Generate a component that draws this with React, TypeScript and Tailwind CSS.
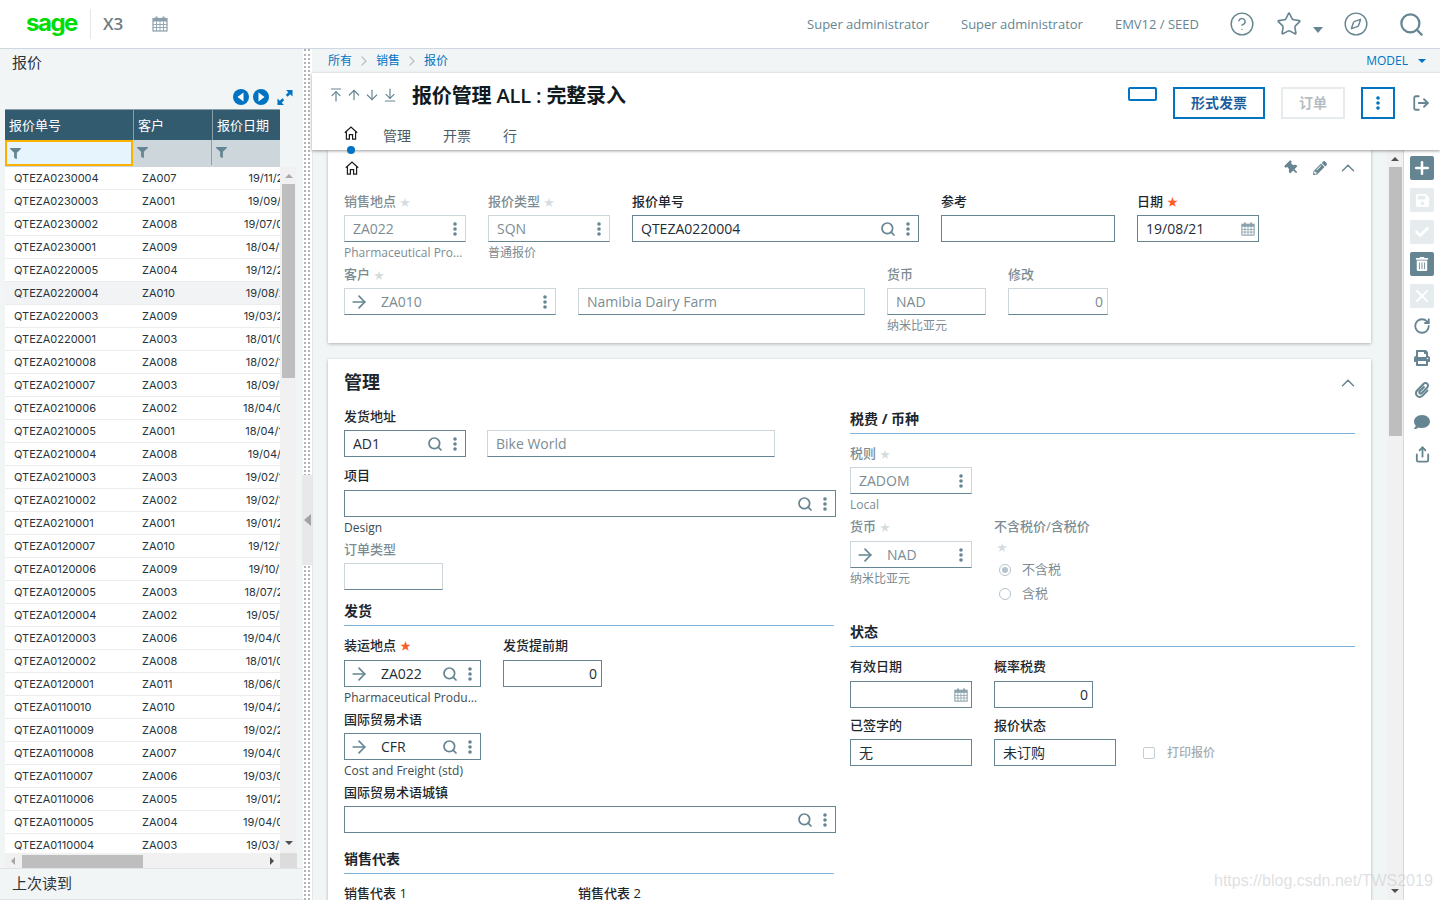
import type { ReactNode } from "react"
import {
  ArrowDown,
  ArrowDownToLine,
  ArrowRight,
  ArrowUp,
  ArrowUpToLine,
  ChevronRight,
  ChevronUp,
  CircleHelp,
  Compass,
  LogOut,
  Plus,
  RotateCw,
  Search,
  Share,
  Star,
  X,
} from "lucide-react"
import { FaCheck, FaComment, FaFilter, FaPaperclip, FaPencilAlt, FaPrint, FaSave, FaThumbtack, FaTrashAlt } from "react-icons/fa"

const rows = [
  ["QTEZA0230004", "ZA007", "19/11/25"],
  ["QTEZA0230003", "ZA001", "19/09/11"],
  ["QTEZA0230002", "ZA008", "19/07/03"],
  ["QTEZA0230001", "ZA009", "18/04/17"],
  ["QTEZA0220005", "ZA004", "19/12/26"],
  ["QTEZA0220004", "ZA010", "19/08/21"],
  ["QTEZA0220003", "ZA009", "19/03/25"],
  ["QTEZA0220001", "ZA003", "18/01/08"],
  ["QTEZA0210008", "ZA008", "18/02/16"],
  ["QTEZA0210007", "ZA003", "18/09/17"],
  ["QTEZA0210006", "ZA002", "18/04/05"],
  ["QTEZA0210005", "ZA001", "18/04/14"],
  ["QTEZA0210004", "ZA008", "19/04/11"],
  ["QTEZA0210003", "ZA003", "19/02/18"],
  ["QTEZA0210002", "ZA002", "19/02/15"],
  ["QTEZA0210001", "ZA001", "19/01/25"],
  ["QTEZA0120007", "ZA010", "19/12/16"],
  ["QTEZA0120006", "ZA009", "19/10/17"],
  ["QTEZA0120005", "ZA003", "18/07/25"],
  ["QTEZA0120004", "ZA002", "19/05/17"],
  ["QTEZA0120003", "ZA006", "19/04/05"],
  ["QTEZA0120002", "ZA008", "18/01/08"],
  ["QTEZA0120001", "ZA011", "18/06/05"],
  ["QTEZA0110010", "ZA010", "19/04/25"],
  ["QTEZA0110009", "ZA008", "19/02/25"],
  ["QTEZA0110008", "ZA007", "19/04/08"],
  ["QTEZA0110007", "ZA006", "19/03/05"],
  ["QTEZA0110006", "ZA005", "19/01/25"],
  ["QTEZA0110005", "ZA004", "19/04/09"],
  ["QTEZA0110004", "ZA003", "19/03/17"],
]

function Dots() {
  return (
    <svg width="4" height="14" viewBox="0 0 4 14" className="shrink-0 fill-[#668592]">
      <circle cx="2" cy="2" r="1.8" />
      <circle cx="2" cy="7" r="1.8" />
      <circle cx="2" cy="12" r="1.8" />
    </svg>
  )
}

function CalendarIcon({ className, size = 16 }: { className?: string; size?: number }) {
  return (
    <svg width={size} height={size} viewBox="0 0 16 16" className={className}>
      <rect x="1" y="2.5" width="14" height="12.5" fill="none" stroke="#8aa0ab" strokeWidth="1.2" />
      <rect x="1" y="2.5" width="14" height="3" fill="#8aa0ab" />
      <rect x="3.5" y="0.5" width="2" height="3.5" fill="#8aa0ab" />
      <rect x="10.5" y="0.5" width="2" height="3.5" fill="#8aa0ab" />
      <path d="M1 8.5H15M1 11.5H15M4.5 5.5V15M8 5.5V15M11.5 5.5V15" stroke="#8aa0ab" strokeWidth="0.9" />
    </svg>
  )
}

function HomeIcon() {
  return (
    <svg width="14" height="14" viewBox="0 0 14 14" fill="none" stroke="#1c1c1c" strokeWidth="1.2">
      <path d="M0.8 6.8L7 1L13.2 6.8" />
      <path d="M2.4 5.6V13.2H5.4V8.6H8.6V13.2H11.6V5.6" />
    </svg>
  )
}

type InputProps = {
  w: string
  value?: string
  disabled?: boolean
  arrow?: boolean
  search?: boolean
  more?: boolean
  calendar?: boolean
  right?: boolean
}

function Input({ w, value, disabled, arrow, search, more, calendar, right }: InputProps) {
  return (
    <div
      className={`${w} h-[27px] flex items-center border shrink-0 ${
        disabled ? "border-[#ccd6db] border-b-[#668592] text-[#7d8c93]" : "border-[#668592] text-[#1f2d36]"
      } bg-white pl-[8px] ${right ? "pr-[4px]" : "pr-[8px]"} text-[14px]`}
    >
      {arrow && <ArrowRight size={20} strokeWidth={2} className="text-[#668592] -ml-[4px] mr-[10px] shrink-0" />}
      <span className={`flex-1 truncate ${right ? "text-right" : ""} ${arrow ? "pl-[2px]" : ""}`}>{value}</span>
      {search && <Search size={16} strokeWidth={2.6} className="text-[#668592] mr-[10px] shrink-0" />}
      {more && <Dots />}
      {calendar && <CalendarIcon size={14} className="-mr-[5px]" />}
    </div>
  )
}

function Label({ text, star, gray, className }: { text: string; star?: "req" | "opt"; gray?: boolean; className?: string }) {
  return (
    <div className={`h-[20px] leading-[18px] text-[13px] font-medium whitespace-nowrap ${gray ? "text-[#7d8c93]" : "text-[#1c262c]"} ${className ?? ""}`}>
      {text}
      {star === "req" && <span className="ml-[4px] text-[#ff5a1f] text-[11px]">★</span>}
      {star === "opt" && <span className="ml-[4px] text-[#d5dcdf] text-[10px]">★</span>}
    </div>
  )
}

function Sub({ text, gray }: { text: string; gray?: boolean }) {
  return <div className={`h-[21px] leading-[21px] text-[12px] truncate ${gray ? "text-[#7d8c93]" : "text-[#3b4a52]"}`}>{text}</div>
}

function Heading({ text, className }: { text: string; className?: string }) {
  return (
    <div className={`h-[25px] leading-[20px] text-[14px] font-bold text-[#1c262c] border-b border-[#7fb4dc] ${className ?? ""}`}>
      {text}
    </div>
  )
}

function ToolButton({ on, children }: { on?: boolean; children: ReactNode }) {
  return (
    <div className={`w-[24px] h-[24px] mb-[8px] rounded-[2px] flex items-center justify-center text-white ${on ? "bg-[#668592]" : "bg-[#e6ebed]"}`}>
      {children}
    </div>
  )
}

function ToolIcon({ children }: { children: ReactNode }) {
  return <div className="w-[24px] h-[24px] mb-[8px] flex items-center justify-center text-[#668592]">{children}</div>
}

function LeftPanel() {
  return (
    <div className="w-[303px] shrink-0 bg-[#f2f5f6] flex flex-col relative">
      <div className="h-[26px] pl-[12px] leading-[26px] text-[15px] text-[#2b343a]">报价</div>
      <div className="h-[18px] mt-[13px] flex items-center justify-end pr-[10px]">
        <svg width="16" height="16" viewBox="0 0 16 16" className="mr-[4px]">
          <circle cx="8" cy="8" r="8" fill="#0073c2" />
          <path d="M10.5 3.5V12.5L4.5 8Z" fill="white" />
        </svg>
        <svg width="16" height="16" viewBox="0 0 16 16" className="mr-[8px]">
          <circle cx="8" cy="8" r="8" fill="#0073c2" />
          <path d="M5.5 3.5V12.5L11.5 8Z" fill="white" />
        </svg>
        <svg width="16" height="15" viewBox="0 0 16 15" fill="#0073c2">
          <path d="M9 0H15.5V6.5L13.2 4.2L10.6 6.8L8.8 5L11.3 2.3Z" />
          <path d="M7 15H0.5V8.5L2.8 10.8L5.4 8.2L7.2 10L4.7 12.7Z" />
        </svg>
      </div>
      <div className="ml-[5px] mt-[3px] flex-1 flex flex-col min-h-0">
        <div className="w-[275px] h-[31px] border-t border-[#8b9fa8] bg-[#335b70] flex text-white text-[13px] leading-[30px] shrink-0">
          <div className="w-[129px] pl-[4px] border-r border-[#8b9fa8]">报价单号</div>
          <div className="w-[79px] pl-[4px] border-r border-[#8b9fa8]">客户</div>
          <div className="flex-1 pl-[4px]">报价日期</div>
        </div>
        <div className="w-[275px] h-[27px] bg-[#ccd6db] flex shrink-0">
          <div className="w-[128px] h-[26px] border-2 border-[#fcb000] bg-[#e6f4fd] flex items-center pl-[3px]">
            <FaFilter size={11} className="text-[#668592]" />
          </div>
          <div className="w-[79px] h-[25px] border-r border-[#8b9fa8] flex items-center pl-[4px]">
            <FaFilter size={11} className="text-[#668592]" />
          </div>
          <div className="flex-1 flex items-center pl-[4px] h-[25px]">
            <FaFilter size={11} className="text-[#668592]" />
          </div>
        </div>
        <div className="h-[686px] flex shrink-0 overflow-hidden">
          <div className="w-[275px] shrink-0">
            {rows.map((r) => (
              <div
                key={r[0]}
                className={`h-[23px] leading-[23px] border-b border-[#ececec] flex text-[11px] text-[#27343b] font-['Inter','Liberation_Sans',sans-serif] ${
                  r[0] === "QTEZA0220004" ? "bg-[#f2f3f5]" : "bg-white"
                }`}
              >
                <div className="w-[129px] pl-[9px]">{r[0]}</div>
                <div className="w-[79px] pl-[8px]">{r[1]}</div>
                <div className="w-[67px] overflow-hidden">
                  <div className="w-[77px] text-right whitespace-nowrap">{r[2]}</div>
                </div>
              </div>
            ))}
          </div>
          <div className="w-[16px] bg-[#f1f1f1] relative">
            <div className="absolute left-[2px] top-[17px] w-[13px] h-[194px] bg-[#bebebe]" />
            <div className="absolute left-[5px] top-[7px] w-0 h-0 border-x-[4px] border-x-transparent border-b-[4px] border-b-[#a8a8a8]" />
            <div className="absolute left-[5px] top-[674px] w-0 h-0 border-x-[4px] border-x-transparent border-t-[4px] border-t-[#505050]" />
          </div>
        </div>
        <div className="h-[15px] flex shrink-0">
          <div className="w-[275px] bg-[#f1f1f1] relative">
            <div className="absolute left-[17px] top-[2px] w-[121px] h-[13px] bg-[#bebebe]" />
            <div className="absolute left-[6px] top-[4px] w-0 h-0 border-y-[4px] border-y-transparent border-r-[4px] border-r-[#a8a8a8]" />
            <div className="absolute left-[265px] top-[4px] w-0 h-0 border-y-[4px] border-y-transparent border-l-[4px] border-l-[#505050]" />
          </div>
          <div className="w-[17px] bg-[#dcdcdc]" />
        </div>
      </div>
      <div className="h-[32px] border-t border-b border-[#dfe3e5] pl-[12px] leading-[28px] text-[15px] text-[#2b343a] shrink-0">上次读到</div>
    </div>
  )
}

function TitleBar() {
  return (
    <div className="h-[77px] bg-white relative z-10 shadow-[0_1px_3px_rgba(0,0,0,0.4)] shrink-0">
      <div className="pt-[14px] pl-[16px] pr-[10px] flex items-start">
        <div className="flex text-[#668592] w-[84px] gap-[2px]">
          <ArrowUpToLine size={16} strokeWidth={1.8} />
          <ArrowUp size={16} strokeWidth={1.8} />
          <ArrowDown size={16} strokeWidth={1.8} />
          <ArrowDownToLine size={16} strokeWidth={1.8} />
        </div>
        <div className="-mt-[5px] text-[20px] leading-[28px] font-semibold tracking-[-0.15px] text-[#111a1f]">报价管理 ALL : 完整录入</div>
        <div className="ml-auto flex items-start gap-[16px]">
          <div className="w-[29px] h-[14px] border-2 border-[#0073c2] rounded-[2px]" />
          <div className="w-[92px] h-[32px] border-2 border-[#0073c2] flex items-center justify-center pb-[2px] text-[14px] font-bold text-[#1d5f9e]">形式发票</div>
          <div className="w-[64px] h-[32px] border-2 border-[#e6ebed] flex items-center justify-center pb-[2px] text-[14px] font-bold text-[#b5bdc2]">订单</div>
          <div className="w-[34px] h-[32px] border-2 border-[#0073c2] flex items-center justify-center">
            <svg width="4" height="14" viewBox="0 0 4 14" className="fill-[#0073c2]">
              <circle cx="2" cy="2" r="1.8" />
              <circle cx="2" cy="7" r="1.8" />
              <circle cx="2" cy="12" r="1.8" />
            </svg>
          </div>
          <div className="h-[32px] flex items-center ml-[1px]">
            <LogOut size={18} strokeWidth={2.4} className="text-[#668592]" />
          </div>
        </div>
      </div>
      <div className="absolute left-[32px] top-[50px] flex items-center h-[20px] text-[14px] text-[#4c5b63]">
        <HomeIcon />
        <span className="ml-[25px] mt-[5px]">管理</span>
        <span className="ml-[32px] mt-[5px]">开票</span>
        <span className="ml-[32px] mt-[5px]">行</span>
      </div>
      <div className="absolute left-[35px] top-[73px] w-[8px] h-[8px] rounded-full bg-[#0073c2]" />
    </div>
  )
}

function TopCard() {
  return (
    <div className="h-[193px] bg-white shadow-[0_1px_3px_rgba(0,0,0,0.28)] px-[16px] shrink-0 mb-[16px]">
      <div className="h-[42px] flex items-center">
        <div className="mt-[-6px] ml-[1px]">
          <HomeIcon />
        </div>
        <div className="ml-auto mt-[-6px] -mr-[4px] flex items-center text-[#668592]">
          <FaThumbtack size={14} className="-rotate-45" />
          <FaPencilAlt size={14} className="ml-[14px]" />
          <ChevronUp size={22} strokeWidth={1.6} className="ml-[10px]" />
        </div>
      </div>
      <div className="flex gap-[22px]">
        <div className="w-[122px]">
          <Label text="销售地点" star="opt" gray className="mb-[3px]" />
          <Input w="w-[122px]" value="ZA022" disabled more />
          <Sub text="Pharmaceutical Products" gray />
        </div>
        <div className="w-[122px]">
          <Label text="报价类型" star="opt" gray className="mb-[3px]" />
          <Input w="w-[122px]" value="SQN" disabled more />
          <Sub text="普通报价" gray />
        </div>
        <div className="w-[287px]">
          <Label text="报价单号" className="mb-[3px]" />
          <Input w="w-[287px]" value="QTEZA0220004" search more />
        </div>
        <div className="w-[174px]">
          <Label text="参考" className="mb-[3px]" />
          <Input w="w-[174px]" />
        </div>
        <div className="w-[122px]">
          <Label text="日期" star="req" className="mb-[3px]" />
          <Input w="w-[122px]" value="19/08/21" calendar />
        </div>
      </div>
      <div className="flex gap-[22px] mt-[2px]">
        <div className="w-[212px]">
          <Label text="客户" star="opt" gray className="mb-[3px]" />
          <Input w="w-[212px]" value="ZA010" disabled arrow more />
        </div>
        <div className="w-[287px] pt-[23px]">
          <Input w="w-[287px]" value="Namibia Dairy Farm" disabled />
        </div>
        <div className="w-[99px]">
          <Label text="货币" gray className="mb-[3px]" />
          <Input w="w-[99px]" value="NAD" disabled />
          <Sub text="纳米比亚元" gray />
        </div>
        <div className="w-[100px]">
          <Label text="修改" gray className="mb-[3px]" />
          <Input w="w-[100px]" value="0" disabled right />
        </div>
      </div>
    </div>
  )
}

function LeftColumn() {
  return (
    <div className="w-[492px] shrink-0">
      <Label text="发货地址" className="mb-[3px]" />
      <div className="flex gap-[21px]">
        <Input w="w-[122px]" value="AD1" search more />
        <Input w="w-[288px]" value="Bike World" disabled />
      </div>
      <Label text="项目" className="mt-[9px] mb-[4px]" />
      <Input w="w-[492px]" search more />
      <Sub text="Design" />
      <Label text="订单类型" gray className="mt-[2px] mb-[3px]" />
      <Input w="w-[99px]" disabled />
      <Heading text="发货" className="mt-[11px] w-[490px]" />
      <div className="flex gap-[22px] mt-[10px]">
        <div className="w-[137px]">
          <Label text="装运地点" star="req" className="mb-[4px]" />
          <Input w="w-[137px]" value="ZA022" arrow search more />
          <Sub text="Pharmaceutical Products" />
        </div>
        <div className="w-[99px]">
          <Label text="发货提前期" className="mb-[4px]" />
          <Input w="w-[99px]" value="0" right />
        </div>
      </div>
      <Label text="国际贸易术语" className="mt-[2px] mb-[3px]" />
      <Input w="w-[137px]" value="CFR" arrow search more />
      <Sub text="Cost and Freight (std)" />
      <Label text="国际贸易术语城镇" className="mt-[2px] mb-[3px]" />
      <Input w="w-[492px]" search more />
      <Heading text="销售代表" className="mt-[16px] w-[490px]" />
      <div className="flex mt-[10px]">
        <Label text="销售代表 1" className="w-[234px]" />
        <Label text="销售代表 2" />
      </div>
    </div>
  )
}

function Radio({ on, text }: { on?: boolean; text: string }) {
  return (
    <div className="h-[24px] flex items-center text-[13px] text-[#7d8c93]">
      <span className="ml-[5px] w-[12px] h-[12px] rounded-full border border-[#b5c4cb] flex items-center justify-center">
        {on && <span className="w-[6px] h-[6px] rounded-full bg-[#b5c4cb]" />}
      </span>
      <span className="ml-[11px]">{text}</span>
    </div>
  )
}

function RightColumn() {
  return (
    <div className="w-[505px] shrink-0 pt-[2px]">
      <Heading text="税费 / 币种" />
      <Label text="税则" star="opt" gray className="mt-[10px] mb-[3px]" />
      <Input w="w-[122px]" value="ZADOM" disabled more />
      <Sub text="Local" gray />
      <div className="flex gap-[22px] mt-[2px]">
        <div className="w-[122px]">
          <Label text="货币" star="opt" gray className="mb-[4px]" />
          <Input w="w-[122px]" value="NAD" disabled arrow more />
          <Sub text="纳米比亚元" gray />
        </div>
        <div>
          <Label text="不含税价/含税价" gray />
          <div className="h-[21px] leading-[21px] text-[10px] text-[#d5dcdf] pl-[3px]">★</div>
          <Radio on text="不含税" />
          <Radio text="含税" />
        </div>
      </div>
      <Heading text="状态" className="mt-[16px]" />
      <div className="flex gap-[22px] mt-[10px]">
        <div className="w-[122px]">
          <Label text="有效日期" className="mb-[4px]" />
          <Input w="w-[122px]" calendar />
        </div>
        <div className="w-[99px]">
          <Label text="概率税费" className="mb-[4px]" />
          <Input w="w-[99px]" value="0" right />
        </div>
      </div>
      <div className="flex gap-[22px] mt-[8px]">
        <div className="w-[122px]">
          <Label text="已签字的" className="mb-[3px]" />
          <Input w="w-[122px]" value="无" />
        </div>
        <div className="w-[122px]">
          <Label text="报价状态" className="mb-[3px]" />
          <Input w="w-[122px]" value="未订购" />
        </div>
        <div className="pt-[24px] h-[50px] flex items-center ml-[5px]">
          <span className="w-[12px] h-[12px] rounded-[2px] border border-[#c3ced3]" />
          <span className="ml-[12px] text-[12px] font-medium text-[#a3adb2]">打印报价</span>
        </div>
      </div>
    </div>
  )
}

function Content() {
  return (
    <div className="flex-1 flex min-h-0 overflow-hidden">
      <div className="w-[1091px] flex bg-[#f2f5f6] shrink-0 border-l border-[#e3e7e9]">
        <div className="flex-1 pl-[15px] pr-[16px] flex flex-col">
          <TopCard />
          <div className="flex-1 bg-white shadow-[0_1px_3px_rgba(0,0,0,0.28)] px-[16px]">
            <div className="pt-[11px] h-[48px] flex items-start">
              <div className="text-[18px] leading-[24px] font-bold text-[#1c262c]">管理</div>
              <ChevronUp size={22} strokeWidth={1.6} className="ml-auto -mr-[4px] mt-[2px] text-[#668592]" />
            </div>
            <div className="flex gap-[14px]">
              <LeftColumn />
              <RightColumn />
            </div>
          </div>
        </div>
        <div className="w-[16px] bg-[#f1f1f1] relative shrink-0">
          <div className="absolute left-[2px] top-[17px] w-[13px] h-[269px] bg-[#bebebe]" />
          <div className="absolute left-[4px] top-[7px] w-0 h-0 border-x-[4px] border-x-transparent border-b-[4px] border-b-[#505050]" />
          <div className="absolute left-[4px] top-[739px] w-0 h-0 border-x-[4px] border-x-transparent border-t-[4px] border-t-[#505050]" />
        </div>
      </div>
      <div className="w-[37px] shrink-0 bg-white border-l border-[#d5d9db] pl-[6px] pt-[6px]">
        <ToolButton on>
          <Plus size={20} strokeWidth={3} />
        </ToolButton>
        <ToolButton>
          <FaSave size={15} />
        </ToolButton>
        <ToolButton>
          <FaCheck size={14} />
        </ToolButton>
        <ToolButton on>
          <FaTrashAlt size={14} />
        </ToolButton>
        <ToolButton>
          <X size={20} strokeWidth={2.4} />
        </ToolButton>
        <div className="-mt-[2px]">
          <ToolIcon>
            <RotateCw size={18} strokeWidth={2.4} />
          </ToolIcon>
          <ToolIcon>
            <FaPrint size={16} />
          </ToolIcon>
          <ToolIcon>
            <FaPaperclip size={16} />
          </ToolIcon>
          <ToolIcon>
            <FaComment size={16} />
          </ToolIcon>
          <ToolIcon>
            <Share size={17} strokeWidth={2.6} />
          </ToolIcon>
        </div>
      </div>
    </div>
  )
}

export default function App() {
  return (
    <div className="w-[1440px] h-[900px] overflow-hidden relative bg-white flex flex-col font-['Open_Sans','Noto_Sans_CJK_SC',sans-serif]">
      <header className="h-[49px] shrink-0 flex items-center bg-white border-b border-[#cfd8e0]">
        <div className="w-[64px] ml-[26px] text-[24px] font-bold leading-none tracking-[-1.5px] text-[#00dc06] -mt-[2px] font-['Inter',sans-serif]">sage</div>
        <div className="w-px h-[30px] bg-[#e6e6e6]" />
        <div className="ml-[12px] text-[17px] font-semibold text-[#6f7c84]">X3</div>
        <CalendarIcon className="ml-[29px]" />
        <div className="ml-auto flex items-center text-[13px] text-[#668592] pr-[15px]">
          <span className="mt-[2px]">Super administrator</span>
          <span className="ml-[32px] mt-[2px]">Super administrator</span>
          <span className="ml-[32px] mt-[2px]">EMV12 / SEED</span>
          <CircleHelp size={26} strokeWidth={1.3} className="ml-[30px]" />
          <Star size={26} strokeWidth={1.5} className="ml-[21px]" />
          <span className="ml-[11px] mt-[12px] w-0 h-0 border-x-[5px] border-x-transparent border-t-[6px] border-t-[#668592]" />
          <Compass size={26} strokeWidth={1.3} className="ml-[20px]" />
          <Search size={27} strokeWidth={2} className="ml-[29px]" />
        </div>
      </header>
      <div className="flex-1 flex min-h-0 relative">
        <LeftPanel />
        <div className="w-[9px] shrink-0 bg-white pl-[1px]">
          <div className="w-[6px] h-full border-x-2 border-dotted border-[#b3b3b3]" />
        </div>
        <div className="absolute left-[302px] top-[426px] w-[10px] h-[90px] bg-[#e8e8e8] flex items-center justify-center">
          <span className="w-0 h-0 border-y-[6px] border-y-transparent border-r-[7px] border-r-[#a3a3a3]" />
        </div>
        <div className="flex-1 flex flex-col min-w-0">
          <div className="h-[24px] bg-[#f2f5f6] shrink-0 flex items-center pl-[16px] pr-[14px] text-[12px] text-[#0073c2]">
            <span>所有</span>
            <ChevronRight size={16} className="mx-[4px] text-[#b9c4c9]" />
            <span>销售</span>
            <ChevronRight size={16} className="mx-[4px] text-[#b9c4c9]" />
            <span>报价</span>
            <span className="ml-auto">MODEL</span>
            <span className="ml-[10px] w-0 h-0 border-x-[4px] border-x-transparent border-t-[4px] border-t-[#0073c2]" />
          </div>
          <TitleBar />
          <Content />
        </div>
      </div>
      <div className="absolute left-[1214px] top-[871px] text-[16px] leading-[20px] text-[#cfd3d6]/70 font-['Liberation_Sans',sans-serif] whitespace-nowrap">
        https://blog.csdn.net/TWS2019
      </div>
    </div>
  )
}
